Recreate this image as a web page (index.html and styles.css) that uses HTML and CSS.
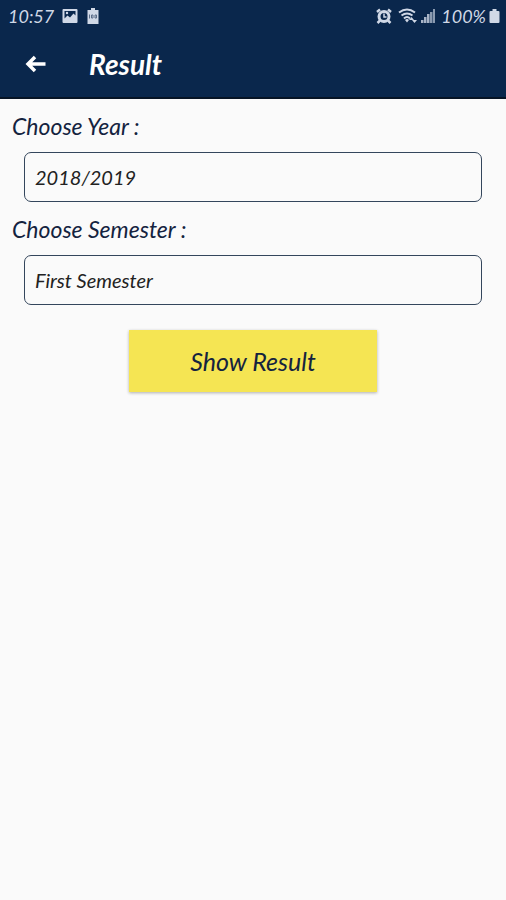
FILE: index.html
```html
<!DOCTYPE html>
<html lang="en">
<head>
  <meta charset="utf-8">
  <meta name="viewport" content="width=device-width, initial-scale=1">
  <title>Result</title>
  <link rel="stylesheet" href="styles.css">
</head>
<body>
  <header class="top">
    <div class="status">
      <span class="status-text">10:57</span>
      <svg class="picture-icon" width="16" height="16" viewBox="0 0 16 16" aria-hidden="true">
        <path fill="currentColor" fill-rule="evenodd" d="M1.500 1h13a1 1 0 0 1 1 1v12a1 1 0 0 1-1 1h-13a1 1 0 0 1-1-1V2a1 1 0 0 1 1-1zM2.500 3v7.500l3-3 2.500 2 3.500-4 2 2V3z"/>
        <circle cx="5" cy="5" r="1.200" fill="currentColor"/>
      </svg>
      <svg class="battery-note" width="12" height="18" viewBox="0 0 12 18" aria-hidden="true">
        <path fill="currentColor" d="M4 1h4v2h3.500v14H.5V3H4z"/>
        <path fill="none" stroke="#5b6d88" d="M2.500 7.500v4M4.500 8h1.500v3H4.500zM8 8h1.500v3H8z"/>
      </svg>
      <span class="spacer"></span>
      <svg class="alarm-icon" width="16" height="16" viewBox="0 0 16 16" aria-hidden="true">
        <path fill="none" stroke="currentColor" stroke-width="2.500" d="M1 4l3-2.500M15 4l-3-2.500M4 12.500l-2.500 2.500M12 12.500l2.500 2.500"/>
        <circle cx="8" cy="8.500" r="5" fill="#0a274c" stroke="currentColor" stroke-width="3"/>
        <path fill="none" stroke="currentColor" stroke-width="1.500" d="M8 5.500V9h2.500"/>
      </svg>
      <svg class="wifi-icon" width="20" height="16" viewBox="0 0 20 16" aria-hidden="true">
        <path fill="none" stroke="currentColor" stroke-width="2" d="M1 4.500q8-6 16 0M3.500 7.500q5.500-4 11 0M6 10.500q3-3 6 0"/>
        <path fill="currentColor" d="M7 12q2-2 4 0l-2 2.500zM11 12l2.500-3 2.500 3zM14 12h5l-2.500 3z"/>
      </svg>
      <svg class="signal-icon" width="14" height="16" viewBox="0 0 14 16" aria-hidden="true">
        <path fill="currentColor" opacity=".8" d="M0 12h2.500v3H0zM3 9h2.500v6H3zM6 6h2.500v9H6z"/>
        <path fill="currentColor" opacity=".65" d="M9 4h2.500v11H9zM12 1h2v14h-2z"/>
      </svg>
      <span class="status-text">100%</span>
      <svg class="battery-icon" width="11" height="16" viewBox="0 0 11 16" aria-hidden="true">
        <path fill="currentColor" d="M3.500 1h4v2h2a1 1 0 0 1 1 1v10a1 1 0 0 1-1 1h-8a1 1 0 0 1-1-1V4a1 1 0 0 1 1-1h2z"/>
      </svg>
    </div>
    <div class="app-bar">
      <button class="back" type="button" aria-label="Back">
        <svg width="22" height="18" viewBox="0 0 22 18" aria-hidden="true">
          <path fill="none" stroke="currentColor" stroke-width="3.500" d="M20.500 9H4M10 2L3 9l7 7"/>
        </svg>
      </button>
      <h1 class="title">Result</h1>
    </div>
  </header>
  <form class="form">
    <label class="label" for="year">Choose Year :</label>
    <select class="field" id="year">
      <option>2018/2019</option>
    </select>
    <label class="label" for="semester">Choose Semester :</label>
    <select class="field" id="semester">
      <option>First Semester</option>
    </select>
    <button class="submit" type="button">Show Result</button>
  </form>
</body>
</html>
```
FILE: styles.css
```css
* {
  box-sizing: border-box;
}

body {
  margin: 0;
  min-height: 100vh;
  background: #fafafa;
  color: #14233f;
  font-family: "Choco Cooky", Lato, sans-serif;
  font-style: italic;
}

button,
select {
  font: inherit;
  color: inherit;
}

.top {
  background: #0a274c;
  color: #fff;
  border-bottom: 2px solid #071425;
}

.status {
  display: flex;
  align-items: center;
  height: 31px;
  padding: 0 6px 0 8px;
  color: #d0d8e6;
}

.status-text {
  font-size: 18px;
  line-height: 24px;
}

.picture-icon {
  margin-left: 8px;
}

.battery-note {
  margin-left: 9px;
}

.spacer {
  flex: 1;
}

.wifi-icon {
  margin-left: 6px;
}

.signal-icon {
  margin-left: 3px;
  margin-right: 6px;
}

.battery-icon {
  margin-left: 3px;
}

.app-bar {
  display: flex;
  align-items: center;
  height: 66px;
  padding-left: 25px;
}

.back {
  display: flex;
  padding: 0;
  border: 0;
  background: none;
}

.title {
  margin: 0 0 0 42px;
  font-size: 28px;
  line-height: 32px;
  font-weight: 700;
}

.form {
  display: flex;
  flex-direction: column;
  padding: 14px 12px;
}

.label {
  font-size: 23px;
  line-height: 26px;
}

.field {
  appearance: none;
  height: 50px;
  margin: 13px 12px 14px;
  padding: 0 10px;
  border: 1px solid #34465c;
  border-radius: 7px;
  background: #fafafa;
  color: #222;
  font-size: 20px;
}

.submit {
  align-self: center;
  width: 248px;
  height: 62px;
  margin-top: 11px;
  border: 0;
  background: #f5e553;
  box-shadow: 0 1px 3px rgba(0, 0, 0, 0.3);
  color: #14233f;
  font-size: 25px;
}
```
